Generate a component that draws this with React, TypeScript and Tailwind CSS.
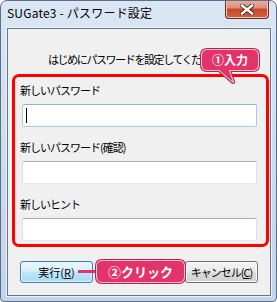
import React from 'react';

const jp = { fontFamily: '"Noto Sans CJK JP", "Noto Sans", sans-serif' };

function CloseButton() {
  return (
    <div className="-mt-px w-[44px] h-[19px] rounded-b-[4px] border border-[#6d2a1e] border-t-0 bg-[linear-gradient(#eab1a4_0%,#dd8c79_45%,#c8452c_50%,#d2663f_100%)] shadow-[inset_0_0_0_1px_#f2c6bb] flex items-center justify-center">
      <svg width="14" height="11" viewBox="0 0 14 11">
        <path d="M2 1.5 L12 9.5 M12 1.5 L2 9.5" stroke="#4a2018" strokeWidth="4.2" strokeLinecap="square" />
        <path d="M2 1.5 L12 9.5 M12 1.5 L2 9.5" stroke="#ffffff" strokeWidth="2.4" strokeLinecap="square" />
      </svg>
    </div>
  );
}

function Field({ label, focused }: { label: string; focused?: boolean }) {
  return (
    <div className="flex flex-col">
      <div className="h-[16px] leading-[16px] pl-[5px] text-[11px] tracking-[-1px] text-black" style={jp}>
        {label}
      </div>
      <div
        className={
          focused
            ? 'mt-[6px] ml-[7px] w-[235px] h-[23px] bg-white border border-[#a9c9e6] border-t-[#8cb4da] rounded-[2px] flex items-center pl-[3px]'
            : 'mt-[6px] ml-[7px] w-[235px] h-[23px] bg-white border border-x-[#dbdfe6] border-t-[#abadb3] border-b-[#e3e9ef] rounded-[2px]'
        }
      >
        {focused && <div className="w-px h-[15px] bg-black" />}
      </div>
    </div>
  );
}

function CalloutShape({ w, h, tail }: { w: number; h: number; tail?: boolean }) {
  const d = tail
    ? `M5,0 H${w - 5} Q${w},0 ${w},5 V${h - 5} Q${w},${h} ${w - 5},${h} H27 L31,32 L17,${h} H5 Q0,${h} 0,${h - 5} V5 Q0,0 5,0 Z`
    : `M5,0 H${w - 5} Q${w},0 ${w},5 V${h - 5} Q${w},${h} ${w - 5},${h} H5 Q0,${h} 0,${h - 5} V5 Q0,0 5,0 Z`;
  const vh = tail ? 36 : h + 4;
  return (
    <svg className="absolute left-[-2px] top-[-2px]" width={w + 4} height={vh} viewBox={`-2 -2 ${w + 4} ${vh}`}>
      <path d={d} fill="none" stroke="#c8194d" strokeWidth="4" strokeLinejoin="round" />
      <path d={d} fill="none" stroke="#ffffff" strokeWidth="1.6" strokeLinejoin="round" />
      <path d={d} fill="#e2336b" />
    </svg>
  );
}

export default function App() {
  return (
    <div className="w-[277px] h-[302px] flex flex-col border border-[#5b6f88] rounded-t-[7px] rounded-b-[4px] bg-gradient-to-b from-[#dae6f3] to-[#c2d4e9] overflow-hidden">
      <div className="h-[27px] shrink-0 flex items-start justify-between pl-[6px] pr-[7px]">
        <span className="mt-[3px] text-[12px] tracking-[0.2px] leading-[18px] text-black" style={jp}>
          SUGate3 - パスワード設定
        </span>
        <CloseButton />
      </div>

      <div className="relative ml-[6px] w-[264px] h-[268px] border border-[#66768a] bg-[#f0f0f0] shadow-[0_0_0_1px_#edf3fa] flex flex-col">
        {/* text runs under the callout; clipped where the callout starts */}
        <div className="mt-[22px] pl-[40px] w-[192px] h-[16px] leading-[16px] text-[11px] tracking-[-1.4px] text-black whitespace-nowrap overflow-hidden" style={jp}>
          はじめにパスワードを設定してください
        </div>

        <div className="mt-[7px] ml-[4px] w-[257px] h-[173px] border-[3px] border-[#ff0000] rounded-[7px] pt-[5px] flex flex-col gap-[12px]">
          <Field label="新しいパスワード" focused />
          <Field label="新しいパスワード(確認)" />
          <Field label="新しいヒント" />
        </div>

        <div className="mt-[14px] px-[12px] flex justify-between">
          <button className="w-[73px] h-[22px] rounded-[3px] border border-[#3c7fb1] bg-[linear-gradient(#eaf6fd_0%,#d9f0fc_45%,#bee6fd_50%,#a7d9f5_100%)] shadow-[inset_0_0_0_1px_#e8f6fe] text-[11px] text-black flex items-center justify-center" style={jp}>
            実行(<span className="underline">R</span>)
          </button>
          <button className="w-[73px] h-[22px] rounded-[3px] border border-[#707070] bg-[linear-gradient(#f2f2f2_0%,#ebebeb_45%,#dddddd_50%,#cfcfcf_100%)] shadow-[inset_0_0_0_1px_#fcfcfc] text-[11px] tracking-[-1px] text-black flex items-center justify-center" style={jp}>
            キャンセル(<span className="underline">C</span>)
          </button>
        </div>

        {/* annotation 1 */}
        <div className="absolute left-[194px] top-[21px] w-[56px] h-[20px]">
          <CalloutShape w={56} h={20} tail />
          <div className="relative h-[20px] flex items-center justify-center text-[12px] font-bold text-white" style={jp}>
            ①入力
          </div>
        </div>

        {/* annotation 2 */}
        <div className="absolute left-[70px] top-[241px] w-[22px] h-[3px] bg-[#e2336b]" />
        <div className="absolute left-[89px] top-[232px] w-[87px] h-[21px]">
          <CalloutShape w={87} h={21} />
          <div className="relative h-[21px] flex items-center justify-center text-[13px] font-bold text-white" style={jp}>
            ②クリック
          </div>
        </div>
      </div>
    </div>
  );
}
